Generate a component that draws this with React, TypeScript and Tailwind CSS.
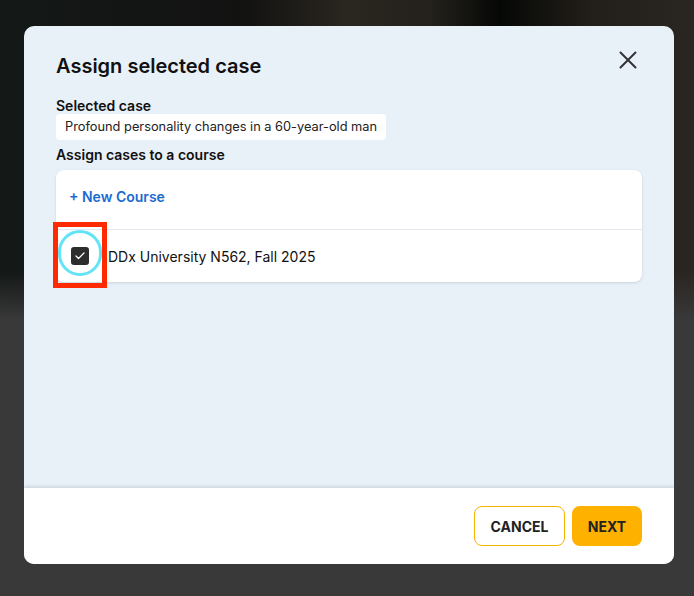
import { Check } from 'lucide-react';

export default function App() {
  return (
    <div
      className="relative h-[596px] w-full overflow-hidden bg-[#393939]"
      style={{ fontFamily: 'Inter, "Noto Sans", sans-serif' }}
    >
      {/* blurred page behind the dialog */}
      <div className="h-[320px] w-full bg-[linear-gradient(90deg,#141917_0%,#121211_35%,#2a2620_50%,#24211c_62%,#060806_72%,#221e19_85%,#2a2622_100%)]">
        <div className="h-full w-full bg-[linear-gradient(180deg,transparent_0%,transparent_85%,#393939_100%)]" />
      </div>

      <div className="absolute left-[24px] top-[26px] flex h-[538px] w-[650px] flex-col overflow-hidden rounded-[10px] bg-[#e8f0f8]">
        <div className="flex-1 px-[32px] pt-[27px]">
          <div className="flex items-start justify-between">
            <h2 className="text-[20px] font-semibold leading-[26px] text-[#111]">Assign selected case</h2>
            <button className="mr-[5px] mt-[-2px] text-[#333]">
              <svg width="18" height="18" viewBox="0 0 18 18" fill="none" stroke="currentColor" strokeWidth="2" strokeLinecap="round">
                <path d="M1.5 1.5l15 15M16.5 1.5l-15 15" />
              </svg>
            </button>
          </div>

          <div className="mt-[19px] text-[14px] font-semibold leading-[16px] text-[#111]">Selected case</div>
          <div className="w-fit rounded-[4px] bg-white px-[9px] py-[4px] text-[12.8px] leading-[18px] text-[#222]">
            Profound personality changes in a 60-year-old man
          </div>
          <div className="mt-[6px] text-[14px] font-semibold leading-[18px] text-[#111]">Assign cases to a course</div>

          <div className="mt-[6px] rounded-[8px] bg-white shadow-[0_1px_3px_rgba(0,0,0,0.12)]">
            <div className="h-[60px] border-b border-[#e3e8ee] px-[13px] pt-[18px] text-[14px] font-semibold leading-[18px] text-[#1b6ad1]">
              + New Course
            </div>
            <div className="flex h-[52px] items-center">
              <div className="relative ml-[-3px] mt-[-2px] flex h-[66px] w-[54px] items-center justify-center border-[5px] border-[#ff2a00]">
                <div className="absolute left-0 top-[3px] h-[46px] w-[44px] rounded-full border-[3px] border-[#62e3f7]" />
                <div className="mt-[2px] flex h-[18px] w-[18px] items-center justify-center rounded-[3px] bg-[#2d2d2d]">
                  <Check className="h-[12px] w-[12px] text-white" strokeWidth={2.5} />
                </div>
              </div>
              <span className="ml-[1px] text-[14px] text-[#111]">DDx University N562, Fall 2025</span>
            </div>
          </div>
        </div>

        <div className="flex h-[76px] items-center justify-end gap-[7px] bg-white px-[32px] shadow-[0_-2px_3px_rgba(0,0,0,0.1)]">
          <button className="h-[40px] w-[91px] rounded-[8px] border border-[#f5b400] bg-white text-[14px] font-bold text-[#222]">
            CANCEL
          </button>
          <button className="h-[40px] w-[70px] rounded-[8px] bg-[#ffb100] text-[14px] font-bold text-[#222]">
            NEXT
          </button>
        </div>
      </div>
    </div>
  );
}
